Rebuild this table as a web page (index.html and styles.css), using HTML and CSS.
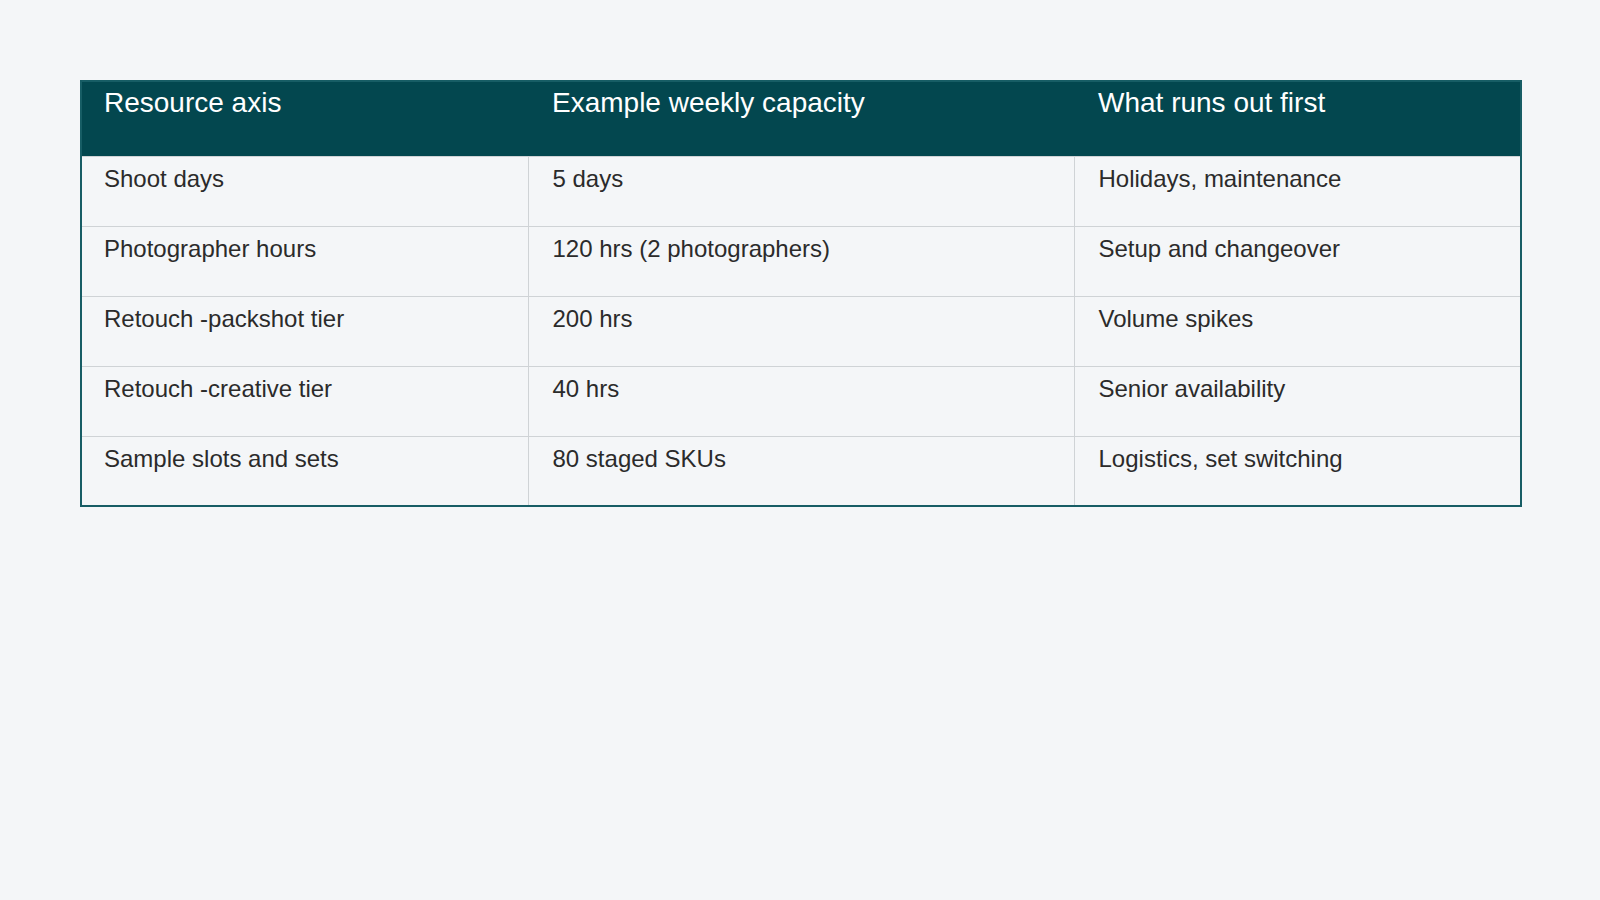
FILE: index.html
```html
<!DOCTYPE html>
<html lang="en">
<head>
<meta charset="utf-8">
<title>Capacity</title>
<link rel="stylesheet" href="styles.css">
</head>
<body>
<main class="page">
  <table class="cap-table">
    <colgroup>
      <col class="c1"><col class="c2"><col class="c3">
    </colgroup>
    <thead>
      <tr>
        <th>Resource axis</th>
        <th>Example weekly capacity</th>
        <th>What runs out first</th>
      </tr>
    </thead>
    <tbody>
      <tr><td>Shoot days</td><td>5 days</td><td>Holidays, maintenance</td></tr>
      <tr><td>Photographer hours</td><td>120 hrs (2 photographers)</td><td>Setup and changeover</td></tr>
      <tr><td>Retouch -packshot tier</td><td>200 hrs</td><td>Volume spikes</td></tr>
      <tr><td>Retouch -creative tier</td><td>40 hrs</td><td>Senior availability</td></tr>
      <tr><td>Sample slots and sets</td><td>80 staged SKUs</td><td>Logistics, set switching</td></tr>
    </tbody>
  </table>
</main>
</body>
</html>
```
FILE: styles.css
```css
html, body {
  margin: 0;
  padding: 0;
  background: #f4f6f8;
}
body {
  font-family: "Liberation Sans", Arial, sans-serif;
  color: #2b2b2b;
}
.page {
  padding: 80px;
}
.cap-table {
  width: 1440px;
  border-collapse: collapse;
  table-layout: fixed;
  border: 2px solid #175d65;
  background: #f4f6f8;
}
.c1 { width: 447px; }
.c2 { width: 546px; }
.c3 { width: 447px; }
.cap-table th {
  background: #03474f;
  color: #ffffff;
  font-weight: normal;
  font-size: 28px;
  line-height: 32px;
  text-align: left;
  vertical-align: top;
  padding: 5px 24px 0 24px;
  height: 73px;
  box-sizing: border-box;
}
.cap-table th:first-child {
  padding-left: 22px;
}
.cap-table thead tr {
  height: 75px;
}
.cap-table tbody tr {
  height: 70px;
}
.cap-table td {
  font-size: 24px;
  line-height: 28px;
  vertical-align: top;
  padding: 8px 24px 0 24px;
  border-top: 1px solid #cfd3d6;
  border-left: 1px solid #cfd3d6;
  box-sizing: border-box;
}
.cap-table td:first-child {
  padding-left: 22px;
  border-left: 2px solid #175d65;
}
```
